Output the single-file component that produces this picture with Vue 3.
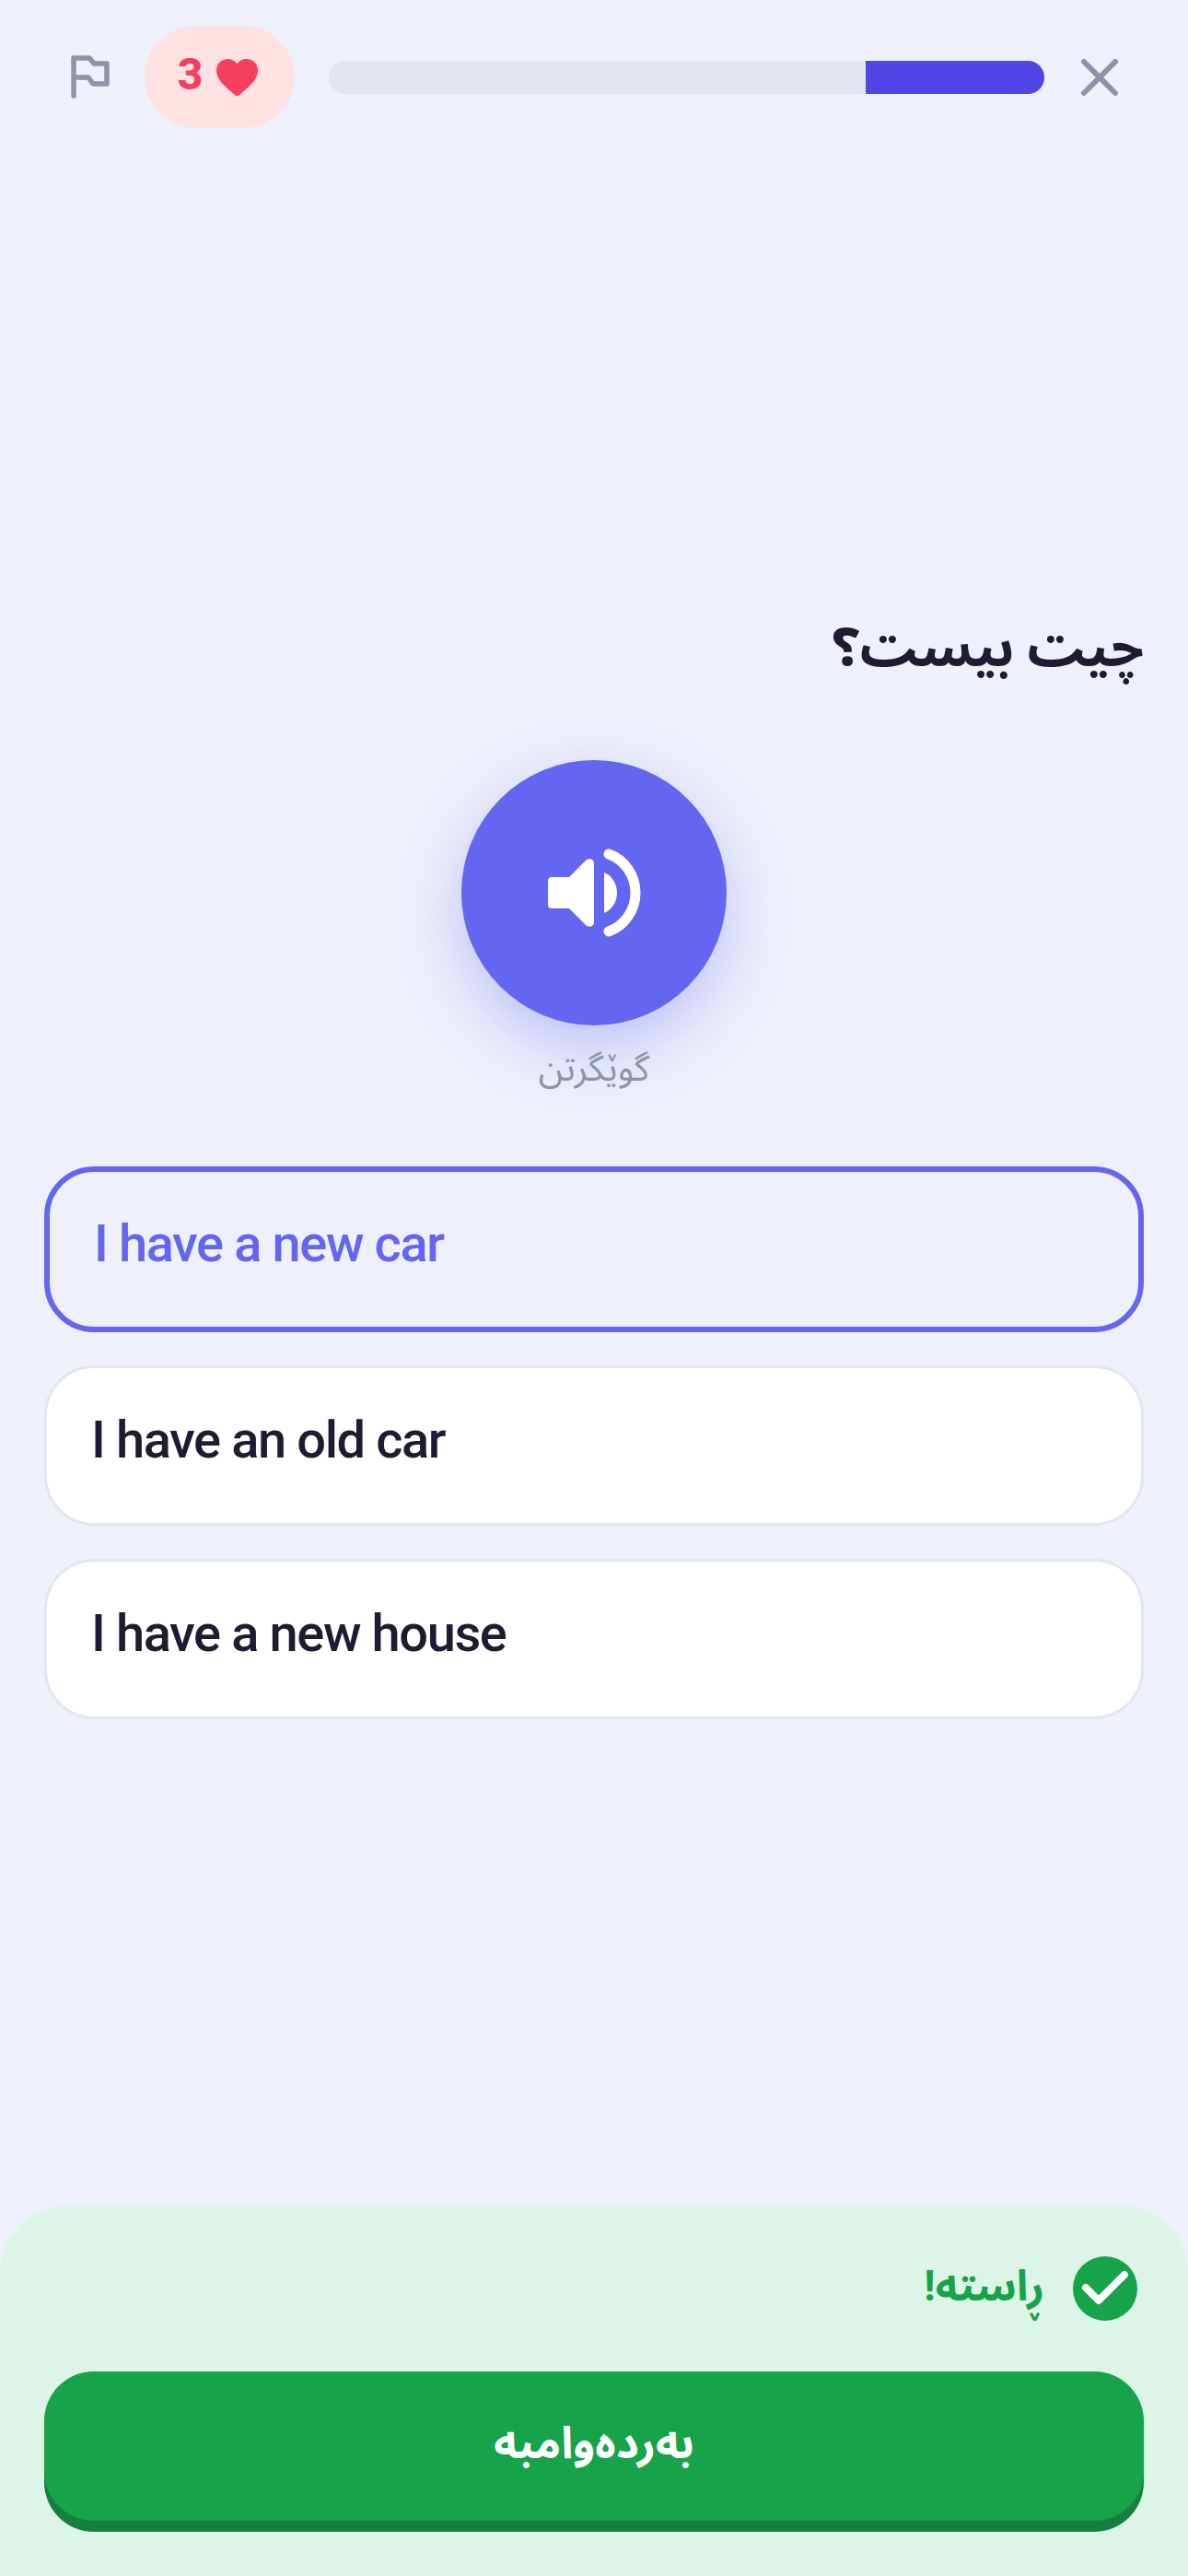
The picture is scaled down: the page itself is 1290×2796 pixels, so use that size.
<template>
  <div class="screen">
    <header class="top">
      <svg class="flag" viewBox="0 0 44 48" fill="none" stroke="#8f93a8" stroke-width="5.500" stroke-linejoin="round" stroke-linecap="round">
        <path d="M4 44V3h17l5 6h14v22H25l-5-7H4" />
      </svg>
      <div class="lives">
        <span class="lives-num">3</span>
        <svg class="heart" viewBox="0 0 45 40" fill="#f43f5e">
          <path d="M22.500 40c-1 0-2-.4-3-1.300C9 29.500 0 22.500 0 12.500 0 5 5.500 0 12.500 0c4 0 7.700 2 10 5.200C24.800 2 28.500 0 32.500 0 39.500 0 45 5 45 12.500c0 10-9 17-19.500 26.200-1 .9-2 1.300-3 1.300z" />
        </svg>
      </div>
      <div class="progress">
        <div class="progress-fill"></div>
      </div>
      <svg class="close" viewBox="0 0 42 42" stroke="#8f93a8" stroke-width="6" stroke-linecap="round">
        <path d="M4 4l34 34M38 4 4 38" />
      </svg>
    </header>

    <main class="content">
      <h1 class="title" dir="rtl">چیت بیست؟</h1>
      <div class="sound">
        <button class="sound-btn">
          <svg viewBox="0 -1 110 100" width="110" height="100" fill="#fff">
            <path d="M9 32h19L46 14c3-3 9-2 9 3v64c0 5-6 6-9 3L28 66H9c-2.500 0-4-1.500-4-4V36c0-2.500 1.500-4 4-4z" />
            <path d="M66 27c8 3 14 12 14 22s-6 19-14 22z" />
            <path d="M71 7c17 6 29 23 29 42s-12 36-29 42" fill="none" stroke="#fff" stroke-width="11" stroke-linecap="round" />
          </svg>
        </button>
        <span class="sound-label" dir="rtl">گوێگرتن</span>
      </div>
      <ul class="options">
        <li
          v-for="opt in options"
          :key="opt"
          class="option"
          :class="{ selected: opt === selected }"
        >{{ opt }}</li>
      </ul>
    </main>

    <footer class="sheet">
      <div class="result" dir="rtl">
        <svg class="check" viewBox="0 0 70 70" fill="none">
          <circle cx="35" cy="35" r="35" fill="#16a34a" />
          <path d="M14 34l14 14 28-28" stroke="#fff" stroke-width="8" stroke-linecap="round" stroke-linejoin="round" />
        </svg>
        <span class="result-text">ڕاستە!</span>
      </div>
      <button class="next">بەردەوامبە</button>
    </footer>
  </div>
</template>

<script setup>
import { ref } from 'vue';

const options = ['I have a new car', 'I have an old car', 'I have a new house'];
const selected = ref('I have a new car');
</script>

<style scoped>
.screen {
  width: 1290px;
  height: 2796px;
  display: flex;
  flex-direction: column;
  background: #eef0fc;
  font-family: Roboto, "Noto Sans Arabic", "Noto Sans", sans-serif;
  color: #1e1b33;
}
.top {
  display: flex;
  align-items: center;
  height: 111px;
  margin-top: 28px;
  padding: 0 75px 0 76px;
}
.flag {
  width: 44px;
  height: 48px;
  flex: none;
}
.lives {
  display: flex;
  align-items: center;
  justify-content: center;
  gap: 15px;
  width: 163px;
  height: 111px;
  margin-left: 37px;
  border-radius: 56px;
  background: #fee2e2;
}
.lives-num {
  font-size: 48px;
  font-weight: 800;
  line-height: 1;
  margin: -6px 0 0 -4px;
  color: #f43f5e;
}
.heart {
  width: 45px;
  height: 40px;
}
.progress {
  flex: 1;
  height: 36px;
  margin: 0 39px 0 37px;
  border-radius: 18px;
  background: #e3e6f1;
  overflow: hidden;
  display: flex;
  justify-content: flex-end;
}
.progress-fill {
  width: 194px;
  background: #4f46e5;
}
.close {
  width: 42px;
  height: 42px;
  flex: none;
}
.content {
  flex: 1;
  padding: 0 48px;
}
.title {
  margin: 522px 0 0;
  font-size: 58px;
  font-weight: 700;
  line-height: 84px;
}
.sound {
  display: flex;
  flex-direction: column;
  align-items: center;
  margin-top: 80px;
}
.sound-btn {
  width: 288px;
  height: 288px;
  padding: 0;
  display: flex;
  align-items: center;
  justify-content: center;
  border: none;
  border-radius: 50%;
  background: #6366f1;
  box-shadow: 0 24px 66px rgba(99, 102, 241, 0.35);
}
.sound-label {
  margin-top: 20px;
  font-size: 39px;
  line-height: 54px;
  color: #8f93a8;
}
.options {
  list-style: none;
  margin: 79px 0 0;
  padding: 0;
  display: flex;
  flex-direction: column;
  gap: 36px;
}
.option {
  padding: 45px 48px 57px;
  border: 3px solid #e3e6f1;
  border-radius: 54px;
  background: #fff;
  font-size: 56px;
  letter-spacing: -1.400px;
  font-weight: 500;
  line-height: 66px;
}
.option.selected {
  border: 6px solid #6366f1;
  background: #eef0fc;
  color: #6366f1;
}
.sheet {
  height: 402px;
  box-sizing: border-box;
  padding: 55px 48px 0;
  border-radius: 72px 72px 0 0;
  background: #dcf5e6;
}
.result {
  display: flex;
  align-items: center;
  gap: 31px;
  padding-right: 7px;
}
.check {
  width: 70px;
  height: 70px;
  flex: none;
}
.result-text {
  font-size: 46px;
  font-weight: 700;
  line-height: 64px;
  margin-bottom: 6px;
  color: #16a34a;
}
.next {
  display: block;
  width: 100%;
  height: 162px;
  margin-top: 55px;
  padding: 0 0 6px;
  border: none;
  border-radius: 54px;
  background: #16a34a;
  box-shadow: 0 12px 0 #15803d;
  color: #fff;
  font-family: inherit;
  font-size: 48px;
  font-weight: 700;
  line-height: 1;
}
</style>
